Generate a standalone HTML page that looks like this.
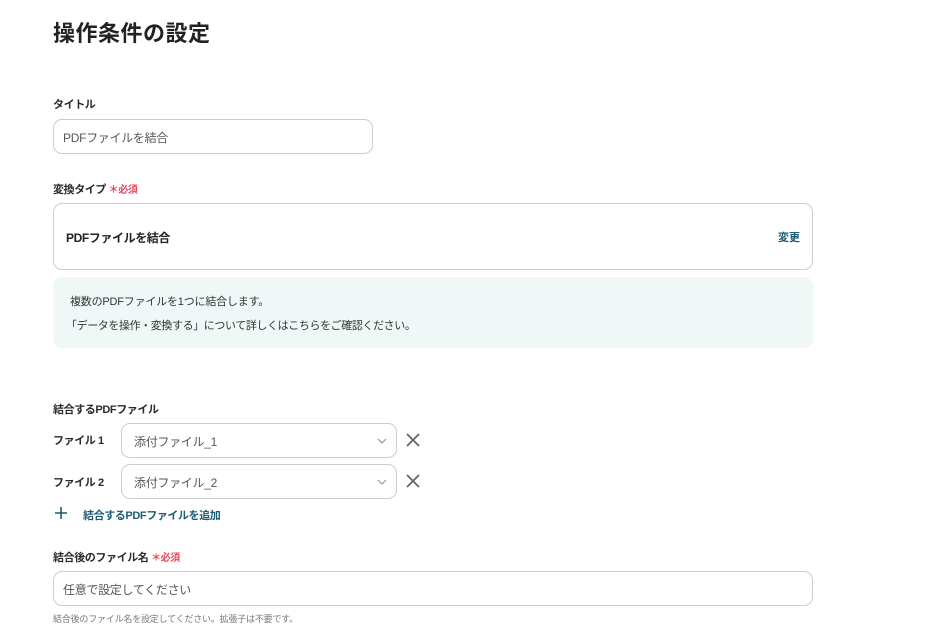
<!DOCTYPE html>
<html><head><meta charset="utf-8"><style>
*{box-sizing:border-box;margin:0;padding:0}
body{width:948px;height:639px;background:#fff;font-family:"Liberation Sans","Noto Sans CJK JP",sans-serif;color:#333;position:relative;overflow:hidden}
.a{position:absolute;white-space:nowrap}
.lbl{font-size:11px;font-weight:bold;color:#2a2a2a;letter-spacing:-0.4px}
.req{color:#e8445a;font-size:10px;font-weight:bold}
.box{position:absolute;border:1px solid #ccc;border-radius:9px;background:#fff}
.ph{font-size:12px;color:#555;letter-spacing:-0.3px}
</style></head><body>
<div class="a" style="left:53px;top:16px;font-size:22px;font-weight:bold;color:#222;letter-spacing:0.5px">操作条件の設定</div>
<div class="a lbl" style="left:53px;top:96px">タイトル</div>
<div class="box" style="left:53px;top:119px;width:320px;height:35px"></div>
<div class="a ph" style="left:63px;top:129px">PDFファイルを結合</div>
<div class="a lbl" style="left:53px;top:181px">変換タイプ <span class="req">＊必須</span></div>
<div class="box" style="left:53px;top:203px;width:760px;height:67px"></div>
<div class="a" style="left:66px;top:229px;font-size:12px;font-weight:bold;color:#222;letter-spacing:-0.4px">PDFファイルを結合</div>
<div class="a" style="left:778px;top:229px;font-size:11px;font-weight:bold;color:#1d5c73">変更</div>
<div class="a" style="left:53px;top:277px;width:760px;height:71px;background:#eff8f7;border-radius:9px"></div>
<div class="a" style="left:70px;top:293px;font-size:11px;color:#333;letter-spacing:-0.2px">複数のPDFファイルを1つに結合します。</div>
<div class="a" style="left:66px;top:317px;font-size:11px;color:#333;letter-spacing:-0.4px">「データを操作・変換する」について詳しくはこちらをご確認ください。</div>
<div class="a lbl" style="left:53px;top:401px">結合するPDFファイル</div>
<div class="a lbl" style="left:53px;top:432px">ファイル 1</div>
<div class="box" style="left:121px;top:423px;width:276px;height:35px"></div>
<div class="a ph" style="left:134px;top:433px">添付ファイル_1</div>
<div class="a lbl" style="left:53px;top:474px">ファイル 2</div>
<div class="box" style="left:121px;top:464px;width:276px;height:35px"></div>
<div class="a ph" style="left:134px;top:474px">添付ファイル_2</div>
<svg class="a" style="left:376px;top:437px" width="12" height="8"><path d="M2 2l4 4 4-4" stroke="#999" fill="none" stroke-width="1.2"/></svg>
<svg class="a" style="left:376px;top:478px" width="12" height="8"><path d="M2 2l4 4 4-4" stroke="#999" fill="none" stroke-width="1.2"/></svg>
<svg class="a" style="left:405px;top:432px" width="16" height="16"><path d="M2 2l12 12M14 2L2 14" stroke="#666" stroke-width="1.8"/></svg>
<svg class="a" style="left:405px;top:473px" width="16" height="16"><path d="M2 2l12 12M14 2L2 14" stroke="#666" stroke-width="1.8"/></svg>
<svg class="a" style="left:55px;top:507px" width="12" height="12"><path d="M6 0v12M0 6h12" stroke="#1d5c73" stroke-width="1.6"/></svg>
<div class="a" style="left:83px;top:507px;font-size:11px;font-weight:bold;color:#1d5c73;letter-spacing:-0.4px">結合するPDFファイルを追加</div>
<div class="a lbl" style="left:53px;top:549px">結合後のファイル名 <span class="req">＊必須</span></div>
<div class="box" style="left:53px;top:571px;width:760px;height:35px"></div>
<div class="a ph" style="left:63px;top:581px">任意で設定してください</div>
<div class="a" style="left:53px;top:612px;font-size:9px;color:#777;letter-spacing:-0.2px">結合後のファイル名を設定してください。拡張子は不要です。</div>
</body></html>
